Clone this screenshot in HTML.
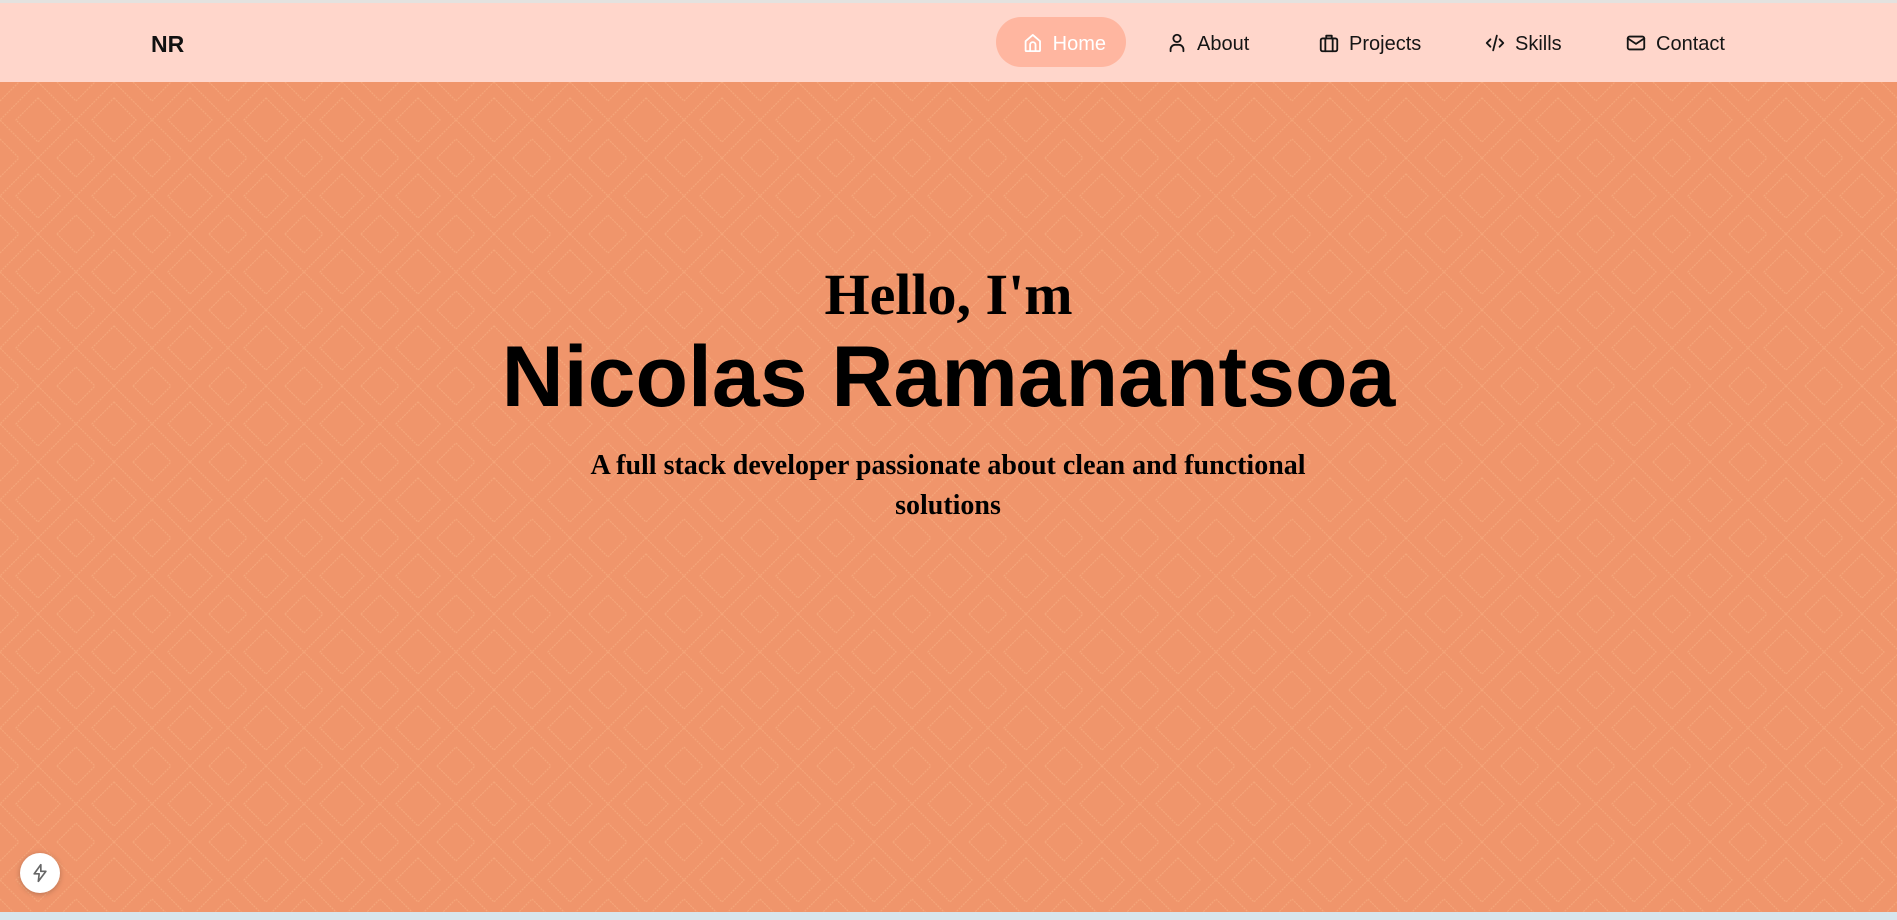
<!DOCTYPE html>
<html><head><meta charset="utf-8"><style>
*{margin:0;padding:0;box-sizing:border-box}
html,body{width:1897px;height:920px;overflow:hidden}
body{background:#f0956b;font-family:"Liberation Sans",sans-serif;position:relative}
.hdr{position:absolute;left:0;top:0;width:1897px;height:82px;background:#ffd6cb;border-top:3px solid #e4e2df}
.logo{position:absolute;left:151px;top:28px;font-weight:bold;font-size:23px;color:#111}
.nav{position:absolute;top:17px;height:50px;display:flex;align-items:center;font-size:20px;color:#151515;padding-top:4px}
.nav svg{width:22px;height:22px;fill:none;stroke:currentColor;stroke-width:2;stroke-linecap:round;stroke-linejoin:round;margin-right:9px;margin-top:-3px}
.pill{background:#ffb6a0;color:#fff;border-radius:25px;padding:4px 20px 0 26px;left:996px;width:130px}
.hero{position:absolute;top:82px;left:0;width:1897px;height:830px}
.t{position:absolute;left:0;width:1897px;text-align:center;color:#000}
.h1{top:261px;font-family:"Liberation Serif",serif;font-weight:bold;font-size:58px}
.h2{top:327px;font-weight:bold;font-size:86px;line-height:100px}
.sub{top:446px;font-family:"Liberation Serif",serif;font-weight:bold;font-size:28px;line-height:40px;width:800px;left:548px}
.bolt{position:absolute;left:20px;top:853px;width:40px;height:40px;border-radius:50%;background:#fff;box-shadow:0 1px 6px rgba(0,0,0,.25);display:flex;align-items:center;justify-content:center}
.strip{position:absolute;left:0;top:912px;width:1897px;height:8px;background:#d8e6ee}
</style></head><body>
<svg class="hero" width="1897" height="830">
<defs><pattern id="p" width="76" height="76" patternUnits="userSpaceOnUse">
<g fill="none" stroke="#f7ad80" stroke-width="1.2" stroke-dasharray="2 1">
<path d="M38 0 L76 38 L38 76 L0 38 Z"/>
<path d="M38 16 L60 38 L38 60 L16 38 Z"/>
<path d="M0 19 L19 0 M57 0 L76 19 M0 57 L19 76 M57 76 L76 57"/>
</g></pattern></defs>
<rect width="1897" height="830" fill="#f0956b"/>
<rect width="1897" height="830" fill="url(#p)" opacity=".65"/>
</svg>
<div class="hdr">
<div class="logo">NR</div>
<div class="nav pill" style="top:14px"><svg viewBox="0 0 24 24"><path d="M4 10 L12 3 L20 10 V20 a1 1 0 0 1-1 1 H5 a1 1 0 0 1-1-1 Z"/><path d="M9 21 V14 a3 3 0 0 1 6 0 V21"/></svg>Home</div>
<div class="nav" style="left:1166px;top:14px"><svg viewBox="0 0 24 24"><circle cx="12" cy="7" r="4"/><path d="M5 21 v-2 a5 5 0 0 1 5-5 h4 a5 5 0 0 1 5 5 v2"/></svg>About</div>
<div class="nav" style="left:1318px;top:14px"><svg viewBox="0 0 24 24"><rect x="3" y="7" width="18" height="14" rx="2"/><path d="M8 7 V21 M16 7 V21 M9 7 V4 h6 V7"/></svg>Projects</div>
<div class="nav" style="left:1484px;top:14px"><svg viewBox="0 0 24 24"><path d="M7 8 L3 12 L7 16 M17 8 L21 12 L17 16 M14 4 L10 20"/></svg>Skills</div>
<div class="nav" style="left:1625px;top:14px"><svg viewBox="0 0 24 24"><rect x="3" y="5" width="18" height="14" rx="2"/><path d="M3 7 L12 13 L21 7"/></svg>Contact</div>
</div>
<div class="t h1">Hello, I'm</div>
<div class="t h2">Nicolas Ramanantsoa</div>
<div class="t sub">A full stack developer passionate about clean and functional solutions</div>
<div class="bolt"><svg width="20" height="20" viewBox="0 0 24 24" fill="none" stroke="#666" stroke-width="2" stroke-linejoin="round"><path d="M13 2 L5 13 H11 L10 22 L19 10 H13 Z"/></svg></div>
<div class="strip"></div>
</body></html>
